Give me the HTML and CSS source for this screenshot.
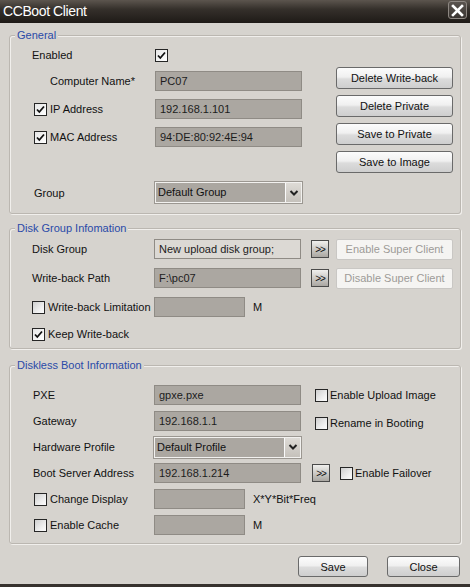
FILE: index.html
```html
<!DOCTYPE html>
<html>
<head>
<meta charset="utf-8">
<title>CCBoot Client</title>
<link rel="stylesheet" href="styles.css">
</head>
<body>
<div class="window">
  <div class="titlebar">
    <span class="title">CCBoot Client</span>
    <span class="close"><svg width="13" height="13" viewBox="0 0 13 13"><path d="M2 2 L11 11 M11 2 L2 11" stroke="#fff" stroke-width="2.6" stroke-linecap="square"/></svg></span>
  </div>
  <div class="content">
    <section class="group g-general">
      <div class="legend">General</div>
      <div class="general-body">
        <div class="left-col">
          <div class="row">
            <div class="lcell pad22">Enabled</div>
            <span class="cb checked"><svg width="11" height="11" viewBox="0 0 11 11"><path d="M2 5.5 L4.3 8 L9 2.5" stroke="#111" stroke-width="1.8" fill="none"/></svg></span>
          </div>
          <div class="row mt6">
            <div class="lcell pad40">Computer Name*</div>
            <div class="field">PC07</div>
          </div>
          <div class="row mt8">
            <div class="lcell pad24"><span class="cb checked"><svg width="11" height="11" viewBox="0 0 11 11"><path d="M2 5.5 L4.3 8 L9 2.5" stroke="#111" stroke-width="1.8" fill="none"/></svg></span>IP Address</div>
            <div class="field">192.168.1.101</div>
          </div>
          <div class="row mt8">
            <div class="lcell pad24"><span class="cb checked"><svg width="11" height="11" viewBox="0 0 11 11"><path d="M2 5.5 L4.3 8 L9 2.5" stroke="#111" stroke-width="1.8" fill="none"/></svg></span>MAC Address</div>
            <div class="field">94:DE:80:92:4E:94</div>
          </div>
          <div class="row row-sel mt35">
            <div class="lcell pad24">Group</div>
            <div class="select"><span class="sel-text">Default Group</span><span class="sel-btn"><svg width="10" height="8" viewBox="0 0 10 8"><path d="M1.5 2 L5 5.5 L8.5 2" stroke="#222" stroke-width="2" fill="none"/></svg></span></div>
          </div>
        </div>
        <div class="btn-col">
          <div class="btn wide">Delete Write-back</div>
          <div class="btn wide">Delete Private</div>
          <div class="btn wide">Save to Private</div>
          <div class="btn wide">Save to Image</div>
        </div>
      </div>
    </section>

    <section class="group g-disk">
      <div class="legend">Disk Group Infomation</div>
      <div class="row">
        <div class="lcell pad22">Disk Group</div>
        <div class="field light">New upload disk group;</div>
        <div class="mini ml10">&gt;&gt;</div>
        <div class="btn wide disabled ml7">Enable Super Client</div>
      </div>
      <div class="row mt9">
        <div class="lcell pad22">Write-back Path</div>
        <div class="field">F:\pc07</div>
        <div class="mini ml10">&gt;&gt;</div>
        <div class="btn wide disabled ml7">Disable Super Client</div>
      </div>
      <div class="row mt9">
        <div class="lcell pad22"><span class="cb"></span>Write-back Limitation</div>
        <div class="field short"></div>
        <span class="unit">M</span>
      </div>
      <div class="row mt7">
        <div class="lcell pad22"><span class="cb checked"><svg width="11" height="11" viewBox="0 0 11 11"><path d="M2 5.5 L4.3 8 L9 2.5" stroke="#111" stroke-width="1.8" fill="none"/></svg></span>Keep Write-back</div>
      </div>
    </section>

    <section class="group g-boot">
      <div class="legend">Diskless Boot Information</div>
      <div class="row">
        <div class="lcell pad23">PXE</div>
        <div class="field">gpxe.pxe</div>
        <span class="cb ml14"></span><span class="cblab">Enable Upload Image</span>
      </div>
      <div class="row mt6">
        <div class="lcell pad23">Gateway</div>
        <div class="field">192.168.1.1</div>
        <span class="cb ml14 down2"></span><span class="cblab down2">Rename in Booting</span>
      </div>
      <div class="row mt6">
        <div class="lcell pad23">Hardware Profile</div>
        <div class="select"><span class="sel-text">Default Profile</span><span class="sel-btn"><svg width="10" height="8" viewBox="0 0 10 8"><path d="M1.5 2 L5 5.5 L8.5 2" stroke="#222" stroke-width="2" fill="none"/></svg></span></div>
      </div>
      <div class="row mt6">
        <div class="lcell pad23">Boot Server Address</div>
        <div class="field">192.168.1.214</div>
        <div class="mini ml11">&gt;&gt;</div>
        <span class="cb ml10"></span><span class="cblab">Enable Failover</span>
      </div>
      <div class="row mt6">
        <div class="lcell pad24"><span class="cb"></span>Change Display</div>
        <div class="field short"></div>
        <span class="unit">X*Y*Bit*Freq</span>
      </div>
      <div class="row mt6">
        <div class="lcell pad24"><span class="cb"></span>Enable Cache</div>
        <div class="field short"></div>
        <span class="unit">M</span>
      </div>
    </section>

    <div class="footer">
      <div class="btn save">Save</div>
      <div class="btn closebtn">Close</div>
    </div>
  </div>
</div>
</body>
</html>
```

FILE: styles.css
```css
* { box-sizing: border-box; }
html, body { margin: 0; padding: 0; }
body {
  width: 470px;
  height: 587px;
  overflow: hidden;
  background: #d6d3ce;
  font-family: "Liberation Sans", Arial, sans-serif;
  font-size: 11px;
  color: #111;
}
.window {
  width: 470px;
  height: 587px;
  display: flex;
  flex-direction: column;
  background: #d6d3ce;
  border-bottom: 3px solid #37322e;
}
.titlebar {
  flex: none;
  height: 23px;
  display: flex;
  align-items: flex-start;
  justify-content: space-between;
  padding: 0 3px 0 3px;
  background: linear-gradient(180deg, #5c554e 0%, #35302b 40%, #1e1a17 100%);
}
.title {
  color: #fff;
  font-size: 14px;
  letter-spacing: -0.4px;
  line-height: 23px;
}
.close {
  margin-top: 1px;
  width: 19px;
  height: 18px;
  border: 1px solid #8d8782;
  border-radius: 3px;
  background: linear-gradient(180deg, #5a544f, #3a3531);
  display: flex;
  align-items: center;
  justify-content: center;
}
.content {
  display: flex;
  flex-direction: column;
  padding: 0 9px;
}
.group {
  border: 1px solid #bbb7b1;
  border-radius: 3px;
  box-shadow: inset 1px 1px 0 #f1efec, 1px 1px 0 #f1efec;
}
.legend {
  display: block;
  width: max-content;
  margin: -8px 0 0 5px;
  padding: 0 2px;
  line-height: 14px;
  background: #d6d3ce;
  color: #2a4aa8;
}
.g-general { margin-top: 12px; padding-bottom: 10px; }
.g-disk { margin-top: 14px; padding-top: 4px; padding-bottom: 4px; }
.g-disk .legend { margin-top: -12px; margin-bottom: 4px; }
.g-boot { margin-top: 16px; padding-bottom: 8px; }
.g-boot .legend { margin-bottom: 13px; }
.general-body { display: flex; }
.left-col {
  width: 292px;
  display: flex;
  flex-direction: column;
  padding-top: 3px;
}
.btn-col {
  display: flex;
  flex-direction: column;
  gap: 6px;
  padding-top: 25px;
  margin-left: 34px;
}
.row {
  display: flex;
  align-items: center;
  height: 20px;
  flex: none;
}
.row-sel { height: 21px; }
.lcell {
  flex: none;
  width: 144px;
  display: flex;
  align-items: center;
  white-space: nowrap;
}
.g-general .lcell { width: 145px; }
.pad22 { padding-left: 22px; }
.pad23 { padding-left: 23px; }
.pad24 { padding-left: 24px; }
.pad40 { padding-left: 40px; }
.mt6 { margin-top: 6px; }
.mt7 { margin-top: 7px; }
.mt8 { margin-top: 8px; }
.mt9 { margin-top: 9px; }
.mt35 { margin-top: 35px; }
.ml7 { margin-left: 7px; }
.ml10 { margin-left: 10px; }
.ml11 { margin-left: 11px; }
.ml14 { margin-left: 14px; }
.down2 { position: relative; top: 2px; }

.field {
  flex: none;
  width: 147px;
  height: 20px;
  padding-left: 4px;
  border: 1px solid #8f8b85;
  background: #aba7a1;
  line-height: 18px;
  color: #1c1c1c;
  white-space: nowrap;
  overflow: hidden;
}
.field.light { background: #dcd9d4; }
.field.short { width: 91px; }
.unit { margin-left: 8px; }

.select {
  flex: none;
  width: 147px;
  height: 21px;
  display: flex;
  border: 1px solid #f2f1ef;
  outline: 1px solid #9b9791;
  background: #aba7a1;
}
.sel-text {
  flex: 1;
  padding-left: 2px;
  line-height: 19px;
}
.sel-btn {
  width: 16px;
  height: 19px;
  border-left: 1px solid #fafafa;
  background: linear-gradient(180deg, #dedbd6, #c5c1bb);
  display: flex;
  align-items: center;
  justify-content: center;
}

.cb {
  flex: none;
  width: 13px;
  height: 13px;
  margin-right: 3px;
  border: 1px solid #262626;
  background: linear-gradient(135deg, #cfcfcf 0%, #f2f2f2 70%, #fbfbfb 100%);
  display: inline-flex;
  align-items: center;
  justify-content: center;
}
.cb.checked { background: linear-gradient(135deg, #e6e6e6, #ffffff); }
.cblab { margin-left: -1px; white-space: nowrap; }

.btn {
  flex: none;
  height: 22px;
  display: flex;
  align-items: center;
  justify-content: center;
  border: 1px solid #6a6a6a;
  border-radius: 3px;
  background: linear-gradient(180deg, #fcfcfc 0%, #f0f0f0 45%, #dcdcdc 55%, #cecece 100%);
  color: #111;
  white-space: nowrap;
}
.btn.wide { width: 117px; }
.btn.disabled {
  height: 21px;
  border: 1px solid #c9c7c4;
  border-radius: 2px;
  background: #f5f4f2;
  color: #9d9b98;
}
.mini {
  flex: none;
  width: 18px;
  height: 18px;
  border: 1px solid #4a4a4a;
  background: linear-gradient(180deg, #f0efed, #aaa7a2);
  display: flex;
  align-items: center;
  justify-content: center;
  font-size: 10px;
  letter-spacing: -1px;
  color: #111;
}
.footer {
  display: flex;
  justify-content: flex-end;
  gap: 19px;
  margin-top: 12px;
  padding-right: 1px;
}
.btn.save { width: 70px; height: 21px; }
.btn.closebtn { width: 73px; height: 21px; }
```
